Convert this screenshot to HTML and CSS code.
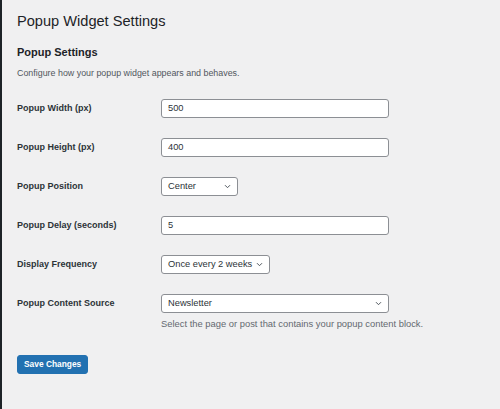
FILE: index.html
```html
<!DOCTYPE html>
<html lang="en">
<head>
<meta charset="utf-8">
<title>Popup Widget Settings</title>
<link rel="stylesheet" href="styles.css">
</head>
<body>
<div class="sidebar"></div>
<main class="wrap">
  <h1 class="page-title">Popup Widget Settings</h1>
  <h2 class="section-title">Popup Settings</h2>
  <p class="intro">Configure how your popup widget appears and behaves.</p>
  <form class="form-table">
    <div class="row">
      <label class="label">Popup Width (px)</label>
      <div class="field"><div class="input">500</div></div>
    </div>
    <div class="row">
      <label class="label">Popup Height (px)</label>
      <div class="field"><div class="input">400</div></div>
    </div>
    <div class="row">
      <label class="label">Popup Position</label>
      <div class="field">
        <div class="select select-pos"><span>Center</span><svg class="chev" width="7" height="5" viewBox="0 0 7 5"><path d="M1 1.2 L3.5 3.7 L6 1.2" fill="none" stroke="#50575e" stroke-width="1"/></svg></div>
      </div>
    </div>
    <div class="row">
      <label class="label">Popup Delay (seconds)</label>
      <div class="field"><div class="input">5</div></div>
    </div>
    <div class="row">
      <label class="label">Display Frequency</label>
      <div class="field">
        <div class="select select-freq"><span>Once every 2 weeks</span><svg class="chev" width="7" height="5" viewBox="0 0 7 5"><path d="M1 1.2 L3.5 3.7 L6 1.2" fill="none" stroke="#50575e" stroke-width="1"/></svg></div>
      </div>
    </div>
    <div class="row">
      <label class="label">Popup Content Source</label>
      <div class="field">
        <div class="select select-wide"><span>Newsletter</span><svg class="chev" width="7" height="5" viewBox="0 0 7 5"><path d="M1 1.2 L3.5 3.7 L6 1.2" fill="none" stroke="#50575e" stroke-width="1"/></svg></div>
        <p class="description">Select the page or post that contains your popup content block.</p>
      </div>
    </div>
  </form>
  <div class="submit"><button class="button-primary" type="button">Save Changes</button></div>
</main>
</body>
</html>
```

FILE: styles.css
```css
* { box-sizing: border-box; }
html, body { height: 100%; }
body {
  margin: 0;
  background: #f0f0f1;
  font-family: "Liberation Sans", Arial, sans-serif;
  color: #1d2327;
  display: flex;
}
.sidebar {
  width: 2px;
  flex: 0 0 2px;
  background: #1d2327;
}
.wrap {
  flex: 1;
  padding-left: 15px;
}
.page-title {
  margin: 12px 0 0;
  font-size: 14.6px;
  line-height: 19.5px;
  font-weight: 400;
  color: #1d2327;
}
.section-title {
  margin: 13.7px 0 0;
  font-size: 11px;
  line-height: 14px;
  font-weight: 700;
  color: #1d2327;
}
.intro {
  margin: 7.7px 0 0;
  font-size: 8.9px;
  line-height: 13px;
  color: #50575e;
}
.form-table {
  margin-top: 9.4px;
}
.row {
  display: grid;
  grid-template-columns: 144px 1fr;
  align-items: start;
  padding: 10px 0;
}
.label {
  font-size: 9px;
  line-height: 19px;
  font-weight: 700;
  color: #2c3338;
}
.field { display: flex; flex-direction: column; align-items: flex-start; }
.input, .select {
  height: 19px;
  background: #fff;
  border: 1px solid #8c8f94;
  border-radius: 3px;
  font-size: 9.3px;
  line-height: 17px;
  color: #2c3338;
  padding: 0 6px;
}
.input { width: 228px; }
.select {
  display: flex;
  align-items: center;
  justify-content: space-between;
  gap: 4px;
  padding-right: 6px;
}
.select-pos { width: 77px; }
.select-freq { width: auto; }
.select-wide { width: 228px; }
.chev { flex: 0 0 auto; }
.description {
  margin: 4px 0 0;
  font-size: 9.4px;
  line-height: 13px;
  color: #646970;
}
.submit { margin-top: 13px; }
.button-primary {
  height: 19px;
  padding: 0 6px;
  background: #2271b1;
  border: 1px solid #2271b1;
  border-radius: 3px;
  color: #fff;
  font-family: "Liberation Sans", Arial, sans-serif;
  font-size: 8.4px;
  font-weight: 700;
  line-height: 17px;
  cursor: pointer;
}
```
